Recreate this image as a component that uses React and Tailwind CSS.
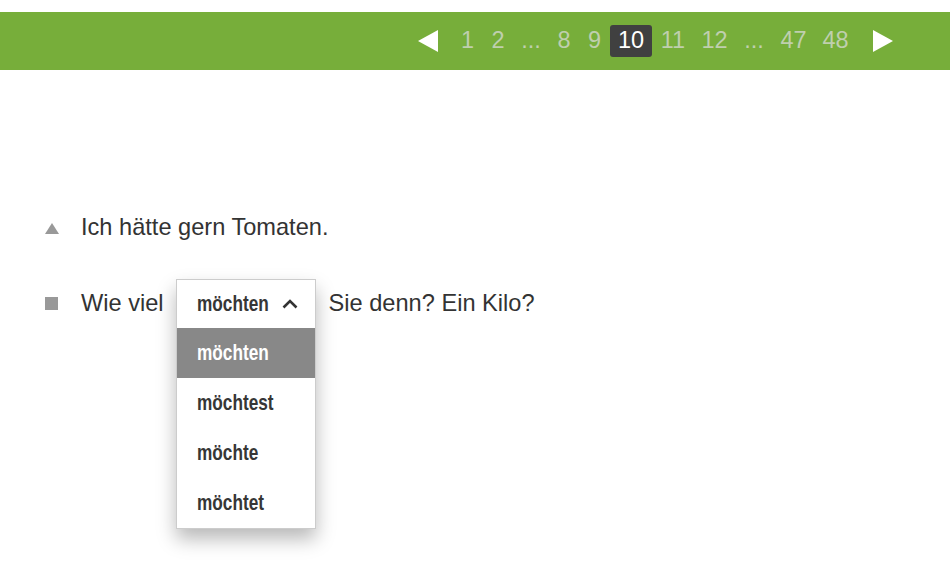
import React from "react";

function ArrowLeft() {
  return (
    <svg width="20" height="22" viewBox="0 0 20 22" className="block">
      <polygon points="20,0 20,22 0,11" fill="#ffffff" />
    </svg>
  );
}
function ArrowRight() {
  return (
    <svg width="20" height="22" viewBox="0 0 20 22" className="block">
      <polygon points="0,0 0,22 20,11" fill="#ffffff" />
    </svg>
  );
}

const pages = [
  { t: "1", w: "w-[31px]" },
  { t: "2", w: "w-[30px]" },
  { t: "...", w: "w-[36px]" },
  { t: "8", w: "w-[30px]" },
  { t: "9", w: "w-[31px]" },
  { t: "10", w: "w-[42px]", active: true },
  { t: "11", w: "w-[42px]" },
  { t: "12", w: "w-[41px]" },
  { t: "...", w: "w-[38px]" },
  { t: "47", w: "w-[41px]" },
  { t: "48", w: "w-[43px]" },
];

function Opt({ children, active }) {
  return (
    <div className={"h-[50px] flex items-center pl-[20px] " + (active ? "bg-[#888888] text-white" : "")}>
      <span className="inline-block scale-x-[0.79] origin-left whitespace-nowrap">{children}</span>
    </div>
  );
}

export default function App() {
  return (
    <div className="w-[950px] h-[585px] bg-white overflow-hidden" style={{ fontFamily: '"Liberation Sans", Arial, sans-serif' }}>
      <div className="h-[12px]" />
      <div className="h-[58px] bg-[#77ae3a] flex items-center justify-end pr-[57px]">
        <div className="mr-[14px]"><ArrowLeft /></div>
        {pages.map((p, i) => (
          <div
            key={i}
            className={
              p.w +
              " h-[32px] flex items-center justify-center text-[23.5px] " +
              (p.active ? "rounded-[3px] bg-[#404040] text-white" : "text-[#bfcfae]")
            }
          >
            {p.t}
          </div>
        ))}
        <div className="ml-[16px]"><ArrowRight /></div>
      </div>

      <div className="pt-[143px] pl-[45px] text-[#333333] text-[23.6px]">
        <div className="flex items-center h-[30px]">
          <svg width="14" height="11" viewBox="0 0 14 11" className="block shrink-0">
            <polygon points="7,0 14,11 0,11" fill="#999999" />
          </svg>
          <span className="ml-[22px]">Ich hätte gern Tomaten.</span>
        </div>
        <div className="flex items-center h-[49px] mt-[36px]">
          <div className="w-[13px] h-[13px] bg-[#999999] shrink-0" />
          <span className="ml-[23px]">Wie viel</span>
          <div className="relative ml-[12px] w-[140px] h-[49px]">
            <div className="absolute left-0 top-0 w-[140px] bg-white border border-[#cccccc] shadow-[0_10px_18px_rgba(0,0,0,0.28)] text-[#363636] font-bold text-[21.8px]">
              <div className="h-[48px] flex items-center pl-[20px]">
                <div className="w-[85px] shrink-0">
                  <span className="inline-block scale-x-[0.79] origin-left whitespace-nowrap">möchten</span>
                </div>
                <svg width="16" height="10" viewBox="0 0 16 10" className="block">
                  <polyline points="1.5,8.5 8,2 14.5,8.5" fill="none" stroke="#333333" strokeWidth="2.6" />
                </svg>
              </div>
              <Opt active>möchten</Opt>
              <Opt>möchtest</Opt>
              <Opt>möchte</Opt>
              <Opt>möchtet</Opt>
            </div>
          </div>
          <span className="ml-[13px]">Sie denn? Ein Kilo?</span>
        </div>
      </div>
    </div>
  );
}
